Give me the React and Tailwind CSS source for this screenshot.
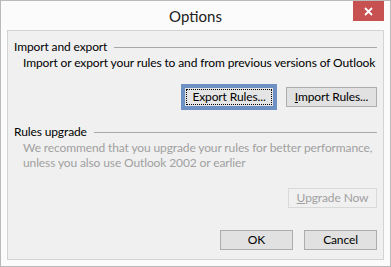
export default function App() {
  const font = { fontFamily: 'Lato, "Open Sans", sans-serif' };
  return (
    <div className="w-[391px] h-[267px] border border-[#bababa] bg-[#fbfbfb] flex flex-col text-[12px] tracking-[-0.12px] text-black" style={font}>
      <div className="relative h-[29px] shrink-0 flex items-center justify-center">
        <span className="text-[15px] leading-none tracking-normal text-[#202020] mt-[1px]">Options</span>
        <div className="absolute right-[6px] top-0 w-[31px] h-[20px] bg-[#c75050] flex items-center justify-center">
          <svg width="9" height="9" viewBox="0 0 9 9">
            <path d="M1 1 L8 8 M8 1 L1 8" stroke="white" strokeWidth="1.8" />
          </svg>
        </div>
      </div>
      <div className="mx-[6px] h-[230px] border border-[#d3d3d3] bg-[#f0f0f0] flex flex-col px-[6px] pt-[8px]">
        <div className="flex items-center h-[16px] leading-[16px]">
          <span className="whitespace-nowrap">Import and export</span>
          <div className="flex-1 h-px bg-[#a8a8a8] ml-[7px]" />
        </div>
        <div className="pl-[9px] h-[16px] leading-[16px] whitespace-nowrap">Import or export your rules to and from previous versions of Outlook</div>
        <div className="flex justify-end items-center mt-[13px] gap-[9px]">
          <div className="w-[96px] h-[26px] bg-[#6e90c3] p-[4px] flex">
            <div className="flex-1 bg-[#e5e5e5] flex items-center justify-center p-[1px]">
              <div className="w-full h-full border border-dotted border-black flex items-center justify-center leading-none">Export Rules...</div>
            </div>
          </div>
          <div className="w-[91px] h-[20px] border border-[#adadad] bg-[#e1e1e1] flex items-center justify-center leading-none">
            <span><span className="underline">I</span>mport Rules...</span>
          </div>
        </div>
        <div className="flex items-center h-[16px] leading-[16px] mt-[14px]">
          <span className="whitespace-nowrap">Rules upgrade</span>
          <div className="flex-1 h-px bg-[#a8a8a8] ml-[7px]" />
        </div>
        <div className="pl-[9px] leading-[15px] text-[#a0a0a0]">
          <div className="whitespace-nowrap">We recommend that you upgrade your rules for better performance,</div>
          <div className="whitespace-nowrap">unless you also use Outlook 2002 or earlier</div>
        </div>
        <div className="flex justify-end mt-[18px]">
          <div className="w-[89px] h-[20px] border border-[#d9d9d9] bg-[#f0f0f0] text-[#a0a0a0] flex items-center justify-center leading-none">
            <span><span className="underline">U</span>pgrade Now</span>
          </div>
        </div>
        <div className="flex justify-end mt-[22px] gap-[11px]">
          <div className="w-[73px] h-[20px] border border-[#adadad] bg-[#e1e1e1] flex items-center justify-center leading-none">OK</div>
          <div className="w-[73px] h-[20px] border border-[#adadad] bg-[#e1e1e1] flex items-center justify-center leading-none">Cancel</div>
        </div>
      </div>
    </div>
  );
}
